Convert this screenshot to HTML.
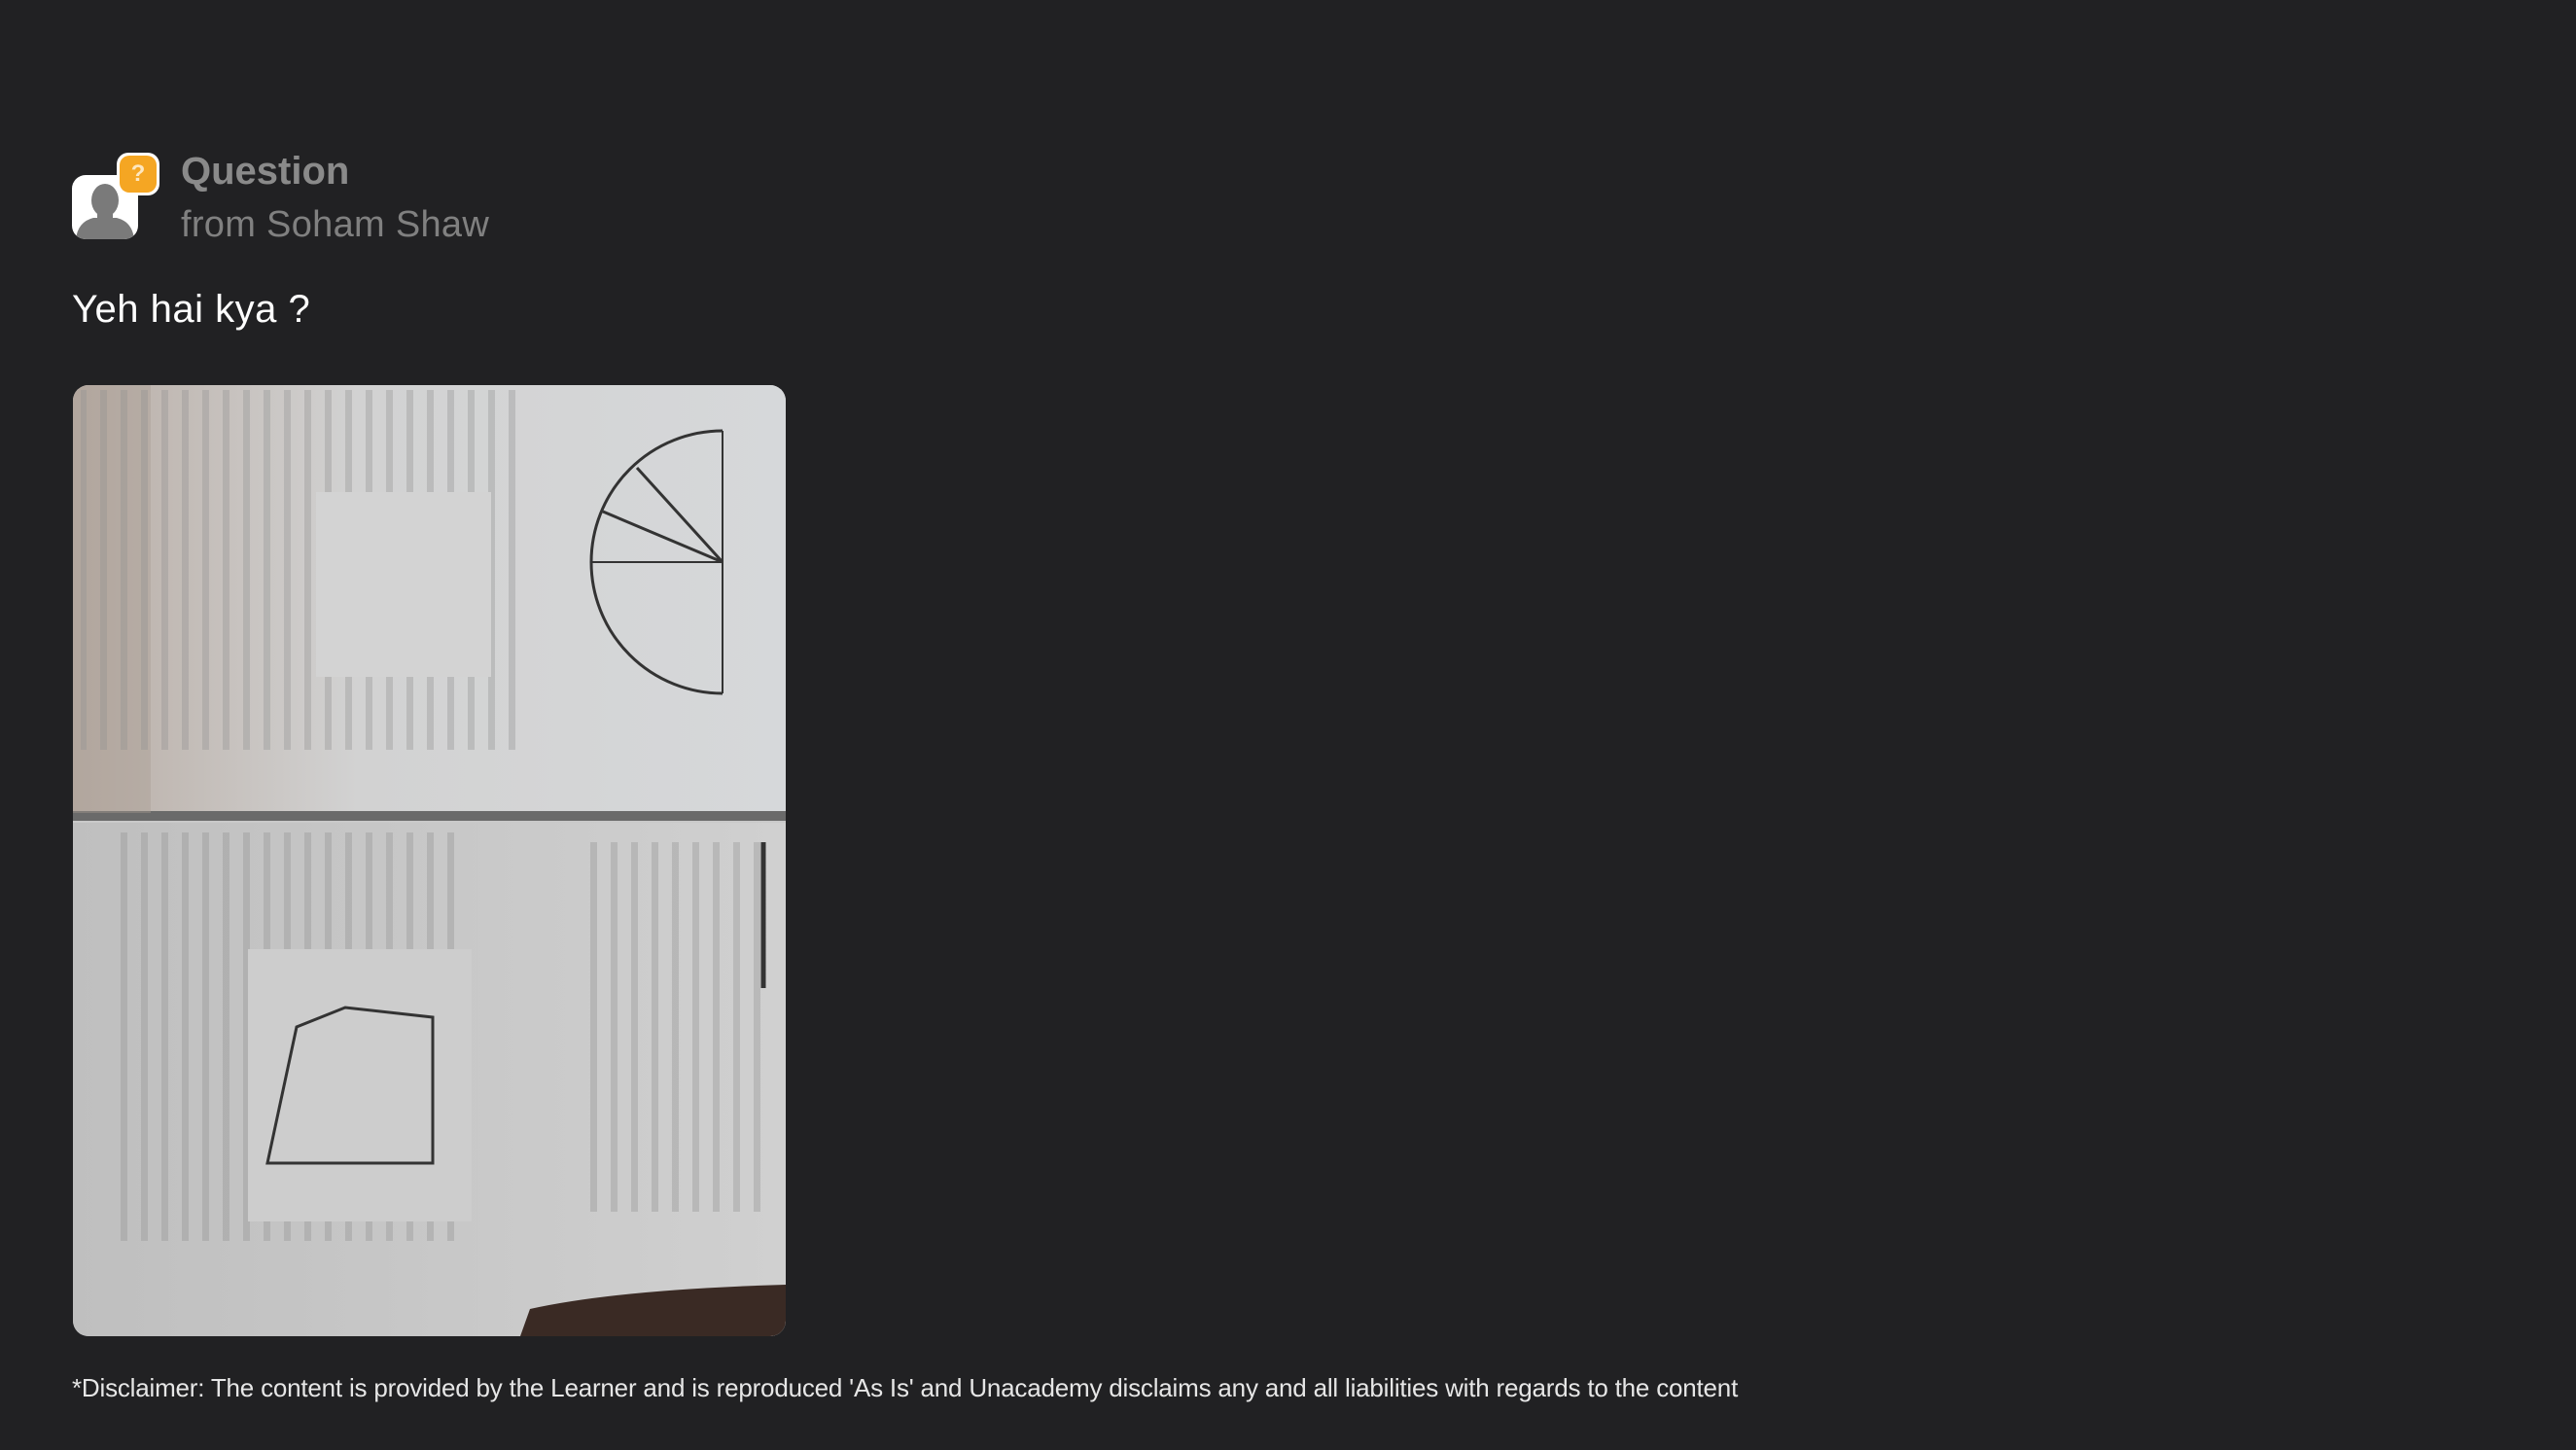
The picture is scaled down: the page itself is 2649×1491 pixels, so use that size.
<!DOCTYPE html>
<html><head><meta charset="utf-8"><style>
html,body{margin:0;padding:0;background:#212123;width:2649px;height:1491px;overflow:hidden;font-family:"Liberation Sans",sans-serif}
.abs{position:absolute}
</style></head><body>
<div class="abs" style="left:74px;top:180px;width:68px;height:66px;background:#fff;border-radius:14px;overflow:hidden">
 <svg width="68" height="66" viewBox="0 0 68 66"><ellipse cx="34" cy="26" rx="14" ry="17" fill="#7a7a7a"/><path d="M4 66 Q6 48 22 44 L46 44 Q62 48 64 66 Z" fill="#7a7a7a"/><rect x="26" y="36" width="16" height="12" fill="#7a7a7a"/></svg>
</div>
<div class="abs" style="left:120px;top:157px;width:44px;height:44px;background:#fff;border-radius:12px"></div>
<div class="abs" style="left:123px;top:160px;width:38px;height:38px;background:#f5a623;border-radius:10px;color:#fde7c0;font-size:24px;font-weight:bold;text-align:center;line-height:38px">?</div>
<div class="abs" style="left:186px;top:154px;font-size:40px;font-weight:bold;color:#8a8a8a">Question</div>
<div class="abs" style="left:186px;top:210px;font-size:38px;color:#808080;letter-spacing:0.3px">from Soham Shaw</div>
<div class="abs" style="left:74px;top:296px;font-size:40px;color:#fff;letter-spacing:0.5px">Yeh hai kya ?</div>
<div class="abs" style="left:75px;top:396px;width:733px;height:978px;border-radius:16px;overflow:hidden;background:#c9c9c9">
<svg width="733" height="978" viewBox="0 0 733 978">
<defs>
<pattern id="t" width="21" height="30" patternUnits="userSpaceOnUse"><rect x="7" y="0" width="7" height="30" fill="#8e8e8e" opacity="0.35"/></pattern>
<linearGradient id="g1" x1="0" y1="0" x2="1" y2="0"><stop offset="0" stop-color="#b9aea6"/><stop offset="0.4" stop-color="#d2d2d2"/><stop offset="1" stop-color="#d6d8da"/></linearGradient>
<linearGradient id="g2" x1="0" y1="0" x2="1" y2="0"><stop offset="0" stop-color="#bfbfbf"/><stop offset="1" stop-color="#d0d0d0"/></linearGradient>
</defs>
<rect width="733" height="440" fill="url(#g1)"/>
<rect y="450" width="733" height="528" fill="url(#g2)"/>
<rect y="438" width="733" height="10" fill="#6a6a6a"/>
<rect x="0" y="0" width="80" height="440" fill="#a89a90" opacity="0.4"/>
<rect x="8" y="5" width="460" height="370" fill="url(#t)"/>
<rect x="250" y="110" width="180" height="190" fill="#d3d3d3"/>
<path d="M668 47 A135 135 0 0 0 668 317" fill="none" stroke="#333" stroke-width="3"/>
<line x1="668" y1="47" x2="668" y2="317" stroke="#333" stroke-width="2"/>
<line x1="668" y1="182" x2="545" y2="130" stroke="#333" stroke-width="3"/>
<line x1="668" y1="182" x2="580" y2="85" stroke="#333" stroke-width="3"/>
<line x1="668" y1="182" x2="533" y2="182" stroke="#333" stroke-width="2"/>
<rect x="40" y="460" width="360" height="420" fill="url(#t)"/>
<rect x="180" y="580" width="230" height="280" fill="#cdcdcd"/>
<path d="M200 800 L370 800 L370 650 L280 640 L230 660 Z" fill="none" stroke="#333" stroke-width="3"/>
<rect x="520" y="470" width="200" height="380" fill="url(#t)"/>
<line x1="710" y1="470" x2="710" y2="620" stroke="#333" stroke-width="5"/>
<path d="M460 978 L470 950 Q560 930 733 925 L733 978 Z" fill="#3a2a24"/>
</svg>
</div>
<div class="abs" style="left:74px;top:1412px;font-size:26px;color:#e6e6e6;white-space:nowrap;letter-spacing:-0.2px">*Disclaimer: The content is provided by the Learner and is reproduced 'As Is' and Unacademy disclaims any and all liabilities with regards to the content</div>
</body></html>
